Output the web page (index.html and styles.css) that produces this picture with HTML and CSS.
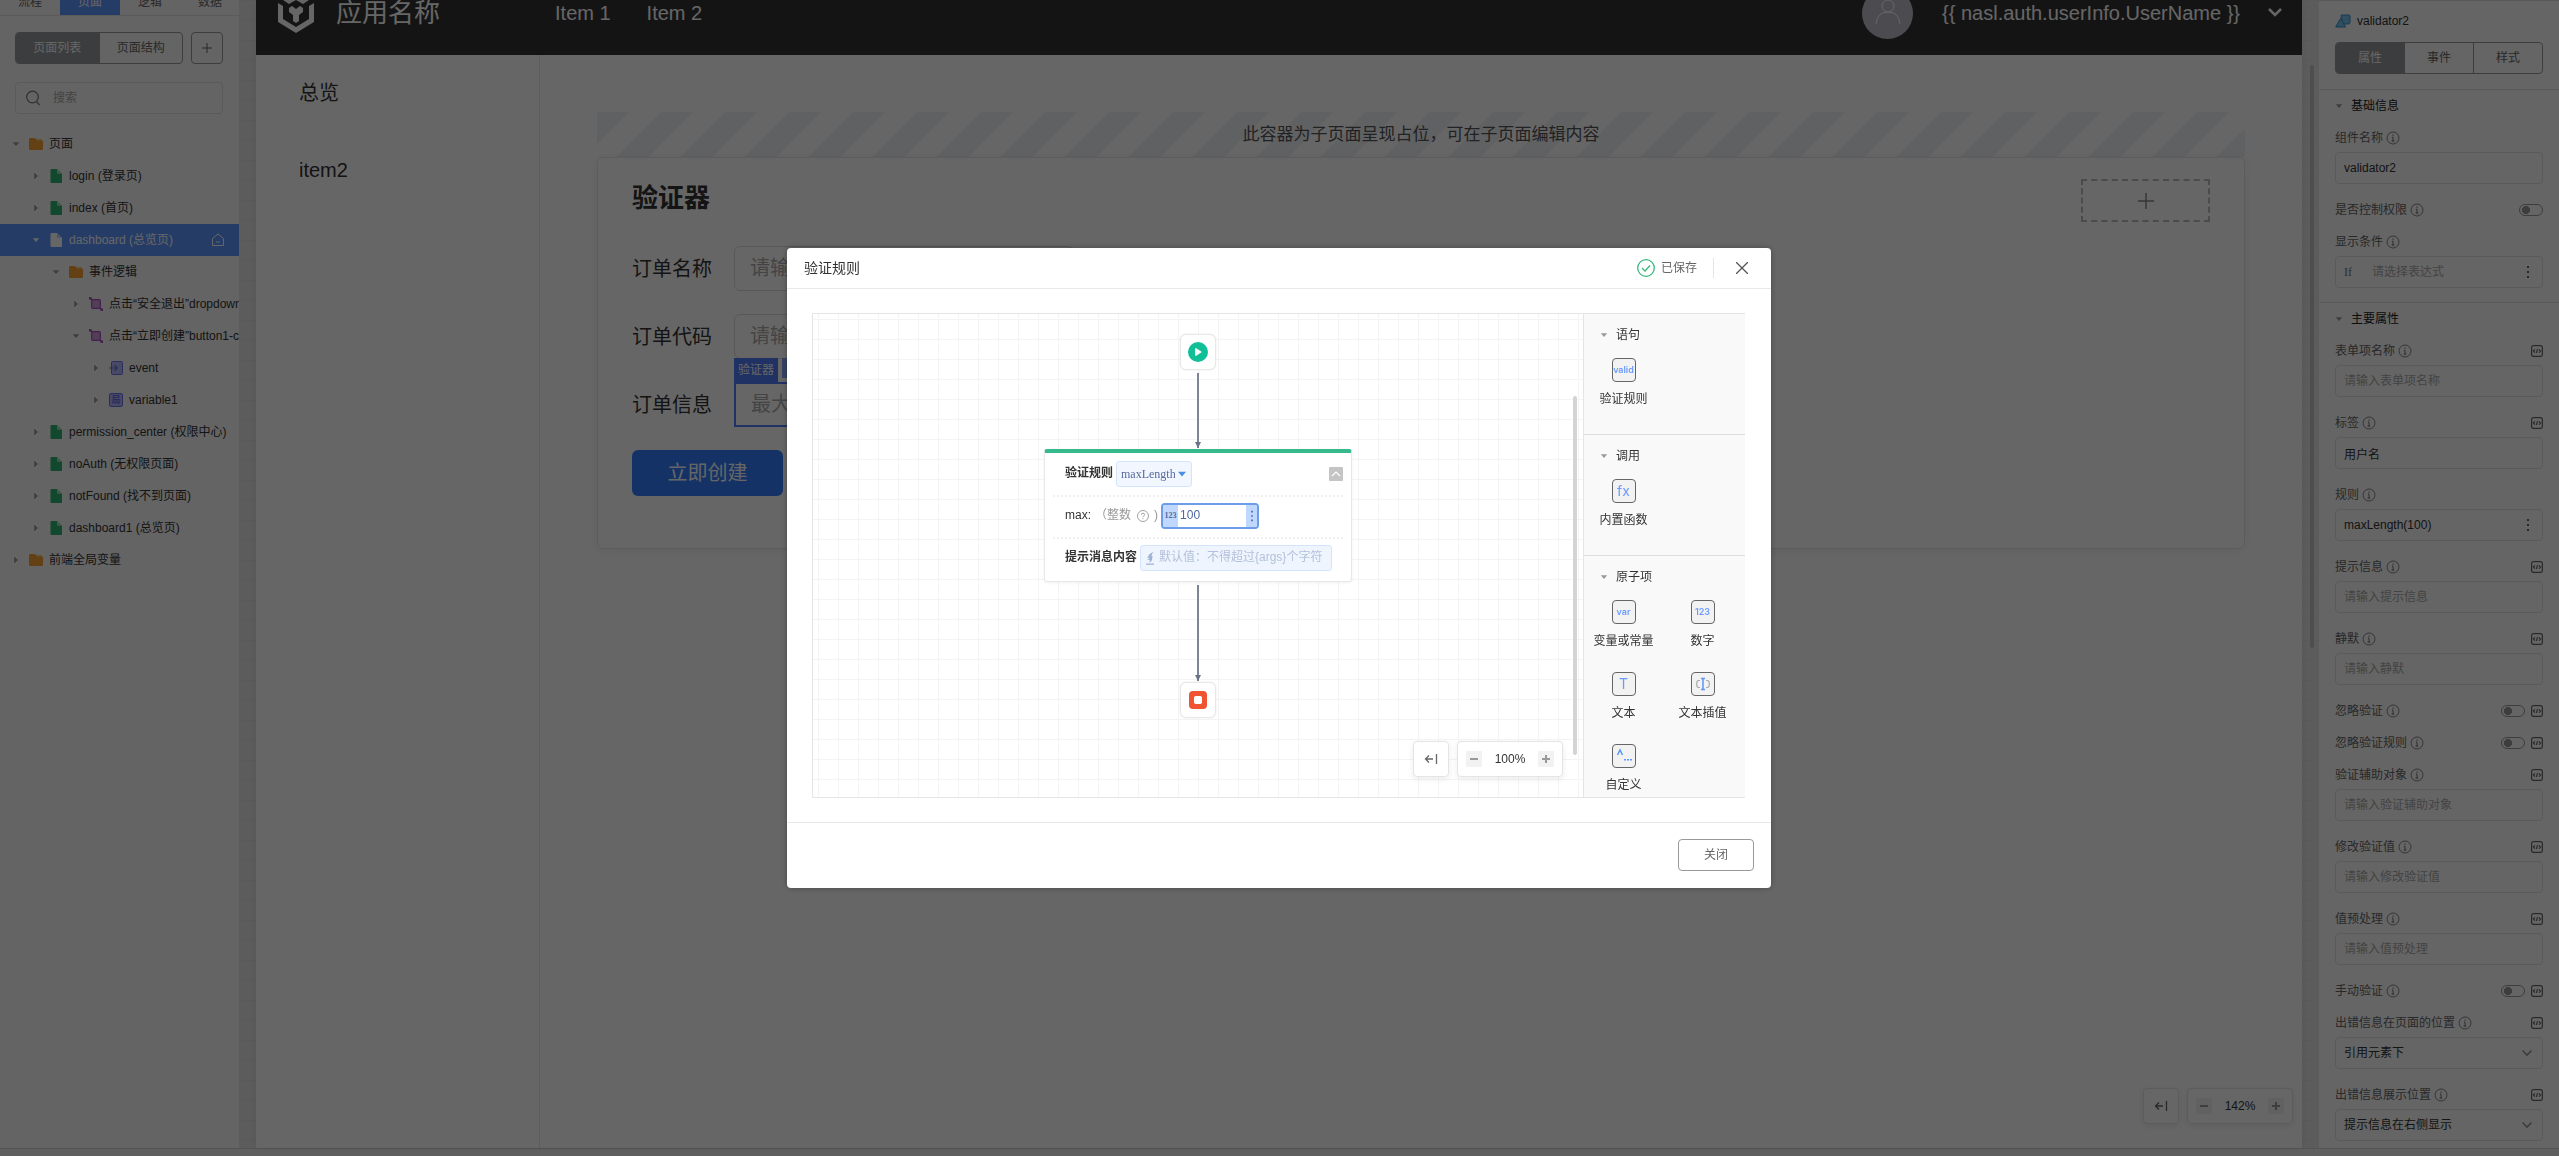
FILE: index.html
```html
<!DOCTYPE html>
<html lang="zh-CN">
<head>
<meta charset="utf-8">
<title>应用名称</title>
<link rel="stylesheet" href="styles.css">
</head>
<body>
<svg class="symbols" aria-hidden="true">
  <symbol id="i-info" viewBox="0 0 14 14"><circle cx="7" cy="7" r="6" fill="none" stroke="currentColor" stroke-width=".8"/><path d="M7 3.500v1.400M6 6.200h1v3.800M5.600 10.100h2.800" fill="none" stroke="currentColor" stroke-width=".9"/></symbol>
  <symbol id="i-code" viewBox="0 0 12 12"><rect x=".6" y=".6" width="10.800" height="10.800" rx="1.800" fill="none" stroke="currentColor" stroke-width="1.200"/><path d="M4 4.300 2.300 6 4 7.700M8 4.300 9.700 6 8 7.700M6.600 4 5.400 8" fill="none" stroke="currentColor" stroke-width="1.100"/></symbol>
  <symbol id="i-down" viewBox="0 0 8 8"><path d="M.8 2.200h6.400L4 6z" fill="currentColor"/></symbol>
  <symbol id="i-right" viewBox="0 0 8 8"><path d="M2.200.8v6.400L6 4z" fill="currentColor"/></symbol>
  <symbol id="i-folder" viewBox="0 0 14 14"><path d="M7 2h6v3H7z" fill="#f9cf94"/><path d="M0 2.200Q0 1 1.200 1H6l2 2.500h5q1 0 1 1V12q0 1-1 1H1q-1 0-1-1z" fill="#f7a233"/></symbol>
  <symbol id="i-page" viewBox="0 0 14 14"><path d="M1.500 1q0-1 1-1H8l5 4.800V13q0 1-1 1H2.500q-1 0-1-1z" fill="var(--page, #2fb573)"/><path d="M8 0l5 4.800H8z" fill="var(--fold, #a5dfc2)"/></symbol>
  <symbol id="i-logic" viewBox="0 0 14 14"><rect x="2.700" y="2.700" width="8.600" height="8.600" rx="1" fill="#cf9ad9" stroke="#a650bd" stroke-width="1.200"/><path d="M.5.500l2.500 2.500M11 11l2.500 2.500" stroke="#a650bd" stroke-width="1.800"/><path d="M0 0h3L0 3zM14 14h-3l3-3z" fill="#a650bd"/></symbol>
  <symbol id="i-event" viewBox="0 0 14 14"><rect x="2.500" y=".5" width="11" height="13" rx="1" fill="#b5b6f5" stroke="#6c6ff0"/><path d="M0 7h8M5.500 4.200 8.300 7 5.500 9.800" fill="none" stroke="#6c6ff0" stroke-width="1.200"/></symbol>
  <symbol id="i-back" viewBox="0 0 14 14"><path d="M1.500 7H9M5 3.500 1.500 7 5 10.500M12.500 2v10" fill="none" stroke="currentColor" stroke-width="1.300"/></symbol>
  <symbol id="i-minus" viewBox="0 0 16 16"><path d="M4 8h8" stroke="currentColor" stroke-width="2"/></symbol>
  <symbol id="i-plus" viewBox="0 0 16 16"><path d="M4 8h8M8 4v8" stroke="currentColor" stroke-width="2"/></symbol>
  <symbol id="i-more" viewBox="0 0 4 14"><path d="M1 1h2v2H1zM1 6h2v2H1zM1 11h2v2H1z" fill="currentColor"/></symbol>
  <symbol id="i-chevron" viewBox="0 0 14 14"><path d="M2.500 4.500 7 9l4.500-4.500" fill="none" stroke="currentColor" stroke-width="1.600"/></symbol>
</svg>

<div class="ide">
  <div class="workspace">
    <aside class="explorer">
      <nav class="tabs">
        <button class="tab">流程</button><button class="tab tab-on">页面</button><button class="tab">逻辑</button><button class="tab">数据</button>
      </nav>
      <div class="tools">
        <div class="segment"><button class="seg seg-on">页面列表</button><button class="seg">页面结构</button></div>
        <button class="add" aria-label="新增"><svg width="10" height="10" viewBox="0 0 10 10"><path d="M0 5h10M5 0v10" stroke="currentColor"/></svg></button>
      </div>
      <label class="search"><svg width="16" height="16" viewBox="0 0 16 16"><circle cx="7.500" cy="7" r="5.800" fill="none" stroke="currentColor" stroke-width="1.200"/><path d="M11.500 11.500 14.500 15" stroke="currentColor" stroke-width="1.200"/></svg><input type="text" placeholder="搜索" aria-label="搜索"></label>
      <ul class="tree">
        <li class="node l0"><svg class="caret"><use href="#i-down"/></svg><svg class="ico"><use href="#i-folder"/></svg><span>页面</span></li>
        <li class="node l1"><svg class="caret"><use href="#i-right"/></svg><svg class="ico"><use href="#i-page"/></svg><span>login (登录页)</span></li>
        <li class="node l1"><svg class="caret"><use href="#i-right"/></svg><svg class="ico"><use href="#i-page"/></svg><span>index (首页)</span></li>
        <li class="node l1 node-on"><svg class="caret"><use href="#i-down"/></svg><svg class="ico"><use href="#i-page"/></svg><span>dashboard (总览页)</span><svg class="home" viewBox="0 0 14 14"><path d="M1.500 5.500 7 1l5.500 4.500v7h-11zM5 9h4" fill="none" stroke="currentColor"/></svg></li>
        <li class="node l2"><svg class="caret"><use href="#i-down"/></svg><svg class="ico"><use href="#i-folder"/></svg><span>事件逻辑</span></li>
        <li class="node l3"><svg class="caret"><use href="#i-right"/></svg><svg class="ico"><use href="#i-logic"/></svg><span>点击“安全退出”dropdown</span></li>
        <li class="node l3"><svg class="caret"><use href="#i-down"/></svg><svg class="ico"><use href="#i-logic"/></svg><span>点击“立即创建”button1-click</span></li>
        <li class="node l4"><svg class="caret"><use href="#i-right"/></svg><svg class="ico"><use href="#i-event"/></svg><span>event</span></li>
        <li class="node l4"><svg class="caret"><use href="#i-right"/></svg><b class="ico local">局</b><span>variable1</span></li>
        <li class="node l1"><svg class="caret"><use href="#i-right"/></svg><svg class="ico"><use href="#i-page"/></svg><span>permission_center (权限中心)</span></li>
        <li class="node l1"><svg class="caret"><use href="#i-right"/></svg><svg class="ico"><use href="#i-page"/></svg><span>noAuth (无权限页面)</span></li>
        <li class="node l1"><svg class="caret"><use href="#i-right"/></svg><svg class="ico"><use href="#i-page"/></svg><span>notFound (找不到页面)</span></li>
        <li class="node l1"><svg class="caret"><use href="#i-right"/></svg><svg class="ico"><use href="#i-page"/></svg><span>dashboard1 (总览页)</span></li>
        <li class="node l0"><svg class="caret"><use href="#i-right"/></svg><svg class="ico"><use href="#i-folder"/></svg><span>前端全局变量</span></li>
      </ul>
    </aside>

    <main class="stage">
      <div class="app">
        <header class="app-head">
          <svg class="logo" viewBox="0 0 36 42"><path d="M0 11v19l18 11 18-11V11l-5 3v13L18 35 5 27V14z" fill="#fff"/><path d="M5 8 18 0l13 8-6 4-7-4-7 4z" fill="#fff"/><path d="m11 16 3-2 4 3 4-3 3 2v4l-4 3v6l-3 2-3-2v-6l-4-3z" fill="#fff"/></svg>
          <span class="app-name">应用名称</span>
          <a href="#" class="app-link">Item 1</a><a href="#" class="app-link">Item 2</a>
          <span class="avatar"><svg width="30" height="30" viewBox="0 0 30 30"><circle cx="15" cy="8" r="6" fill="none" stroke="#fff"/><path d="M3 26q1-12 12-12t12 12" fill="none" stroke="#fff"/></svg></span>
          <span class="user">{{ nasl.auth.userInfo.UserName }}</span>
          <svg class="user-more" viewBox="0 0 20 20"><path d="m4 6 6 6 6-6" fill="none" stroke="currentColor" stroke-width="2.500"/></svg>
        </header>
        <div class="app-body">
          <nav class="app-side"><a href="#">总览</a><a href="#">item2</a></nav>
          <section class="app-main">
            <p class="slot">此容器为子页面呈现占位，可在子页面编辑内容</p>
            <div class="card">
              <div class="card-head"><h2>验证器</h2><button class="drop" aria-label="添加"><svg width="16" height="16" viewBox="0 0 16 16"><path d="M0 8h16M8 0v16" stroke="currentColor" stroke-width="1.500"/></svg></button></div>
              <form class="form">
                <div class="line"><label for="o1">订单名称</label><input id="o1" type="text" placeholder="请输入订单名称"></div>
                <div class="line"><label for="o2">订单代码</label><input id="o2" type="text" placeholder="请输入订单代码"></div>
                <div class="line"><label for="o3">订单信息</label><div class="picked"><div class="picked-tags"><span>验证器</span><i></i></div><input id="o3" type="text" placeholder="最大长度100"></div></div>
                <button type="button" class="create">立即创建</button>
              </form>
            </div>
          </section>
        </div>
      </div>
      <div class="stage-scroll"></div>
      <div class="zoom zoom-stage"><button class="zoom-fit" aria-label="收起"><svg width="14" height="14"><use href="#i-back"/></svg></button><div class="zoom-group"><button aria-label="缩小"><svg width="16" height="16"><use href="#i-minus"/></svg></button><span>142%</span><button aria-label="放大"><svg width="16" height="16"><use href="#i-plus"/></svg></button></div></div>
    </main>

    <aside class="props">
      <div class="props-head">
        <div class="props-name"><svg width="16" height="16" viewBox="0 0 16 16"><path d="M6 3q0-1 1-1h7q1 0 1 1v6q0 2-2 2H8z" fill="#7fc4ee" stroke="#2e94d6"/><path d="M5.500 5.500 10.500 14H.7z" fill="#7fc4ee" stroke="#2e94d6"/></svg><span>validator2</span></div>
        <div class="segment"><button class="seg seg-on">属性</button><button class="seg">事件</button><button class="seg">样式</button></div>
      </div>
      <section class="group">
        <h3><svg class="caret"><use href="#i-down"/></svg>基础信息</h3>
        <div class="field"><div class="cap"><label for="p1">组件名称</label><svg class="info"><use href="#i-info"/></svg></div><input id="p1" class="box" type="text" value="validator2"></div>
        <div class="field flat"><div class="cap"><label for="p2">是否控制权限</label><svg class="info"><use href="#i-info"/></svg><input id="p2" type="checkbox" class="switch"></div></div>
        <div class="field"><div class="cap"><label for="p3">显示条件</label><svg class="info"><use href="#i-info"/></svg></div><div class="box"><span class="if">If</span><input id="p3" type="text" placeholder="请选择表达式"><svg class="more"><use href="#i-more"/></svg></div></div>
      </section>
      <section class="group">
        <h3><svg class="caret"><use href="#i-down"/></svg>主要属性</h3>
        <div class="field"><div class="cap"><label for="q1">表单项名称</label><svg class="info"><use href="#i-info"/></svg><svg class="s12 code"><use href="#i-code"/></svg></div><input id="q1" class="box" type="text" placeholder="请输入表单项名称"></div>
        <div class="field"><div class="cap"><label for="q2">标签</label><svg class="info"><use href="#i-info"/></svg><svg class="s12 code"><use href="#i-code"/></svg></div><input id="q2" class="box" type="text" value="用户名"></div>
        <div class="field"><div class="cap"><label for="q3">规则</label><svg class="info"><use href="#i-info"/></svg></div><div class="box"><input id="q3" type="text" value="maxLength(100)"><svg class="more"><use href="#i-more"/></svg></div></div>
        <div class="field"><div class="cap"><label for="q4">提示信息</label><svg class="info"><use href="#i-info"/></svg><svg class="s12 code"><use href="#i-code"/></svg></div><input id="q4" class="box" type="text" placeholder="请输入提示信息"></div>
        <div class="field"><div class="cap"><label for="q5">静默</label><svg class="info"><use href="#i-info"/></svg><svg class="s12 code"><use href="#i-code"/></svg></div><input id="q5" class="box" type="text" placeholder="请输入静默"></div>
        <div class="field flat"><div class="cap"><label for="q6">忽略验证</label><svg class="info"><use href="#i-info"/></svg><input id="q6" type="checkbox" class="switch"><svg class="s12"><use href="#i-code"/></svg></div></div>
        <div class="field flat"><div class="cap"><label for="q7">忽略验证规则</label><svg class="info"><use href="#i-info"/></svg><input id="q7" type="checkbox" class="switch"><svg class="s12"><use href="#i-code"/></svg></div></div>
        <div class="field"><div class="cap"><label for="q8">验证辅助对象</label><svg class="info"><use href="#i-info"/></svg><svg class="s12 code"><use href="#i-code"/></svg></div><input id="q8" class="box" type="text" placeholder="请输入验证辅助对象"></div>
        <div class="field"><div class="cap"><label for="q9">修改验证值</label><svg class="info"><use href="#i-info"/></svg><svg class="s12 code"><use href="#i-code"/></svg></div><input id="q9" class="box" type="text" placeholder="请输入修改验证值"></div>
        <div class="field"><div class="cap"><label for="q10">值预处理</label><svg class="info"><use href="#i-info"/></svg><svg class="s12 code"><use href="#i-code"/></svg></div><input id="q10" class="box" type="text" placeholder="请输入值预处理"></div>
        <div class="field flat"><div class="cap"><label for="q11">手动验证</label><svg class="info"><use href="#i-info"/></svg><input id="q11" type="checkbox" class="switch"><svg class="s12"><use href="#i-code"/></svg></div></div>
        <div class="field"><div class="cap"><label for="q12">出错信息在页面的位置</label><svg class="info"><use href="#i-info"/></svg><svg class="s12 code"><use href="#i-code"/></svg></div><div class="box"><select id="q12"><option>引用元素下</option></select><svg class="arrow"><use href="#i-chevron"/></svg></div></div>
        <div class="field"><div class="cap"><label for="q13">出错信息展示位置</label><svg class="info"><use href="#i-info"/></svg><svg class="s12 code"><use href="#i-code"/></svg></div><div class="box"><select id="q13"><option>提示信息在右侧显示</option></select><svg class="arrow"><use href="#i-chevron"/></svg></div></div>
      </section>
    </aside>
  </div>
  <footer class="status"></footer>
</div>

<div class="mask">
  <div class="modal" role="dialog" aria-label="验证规则">
    <header class="modal-head">
      <h1>验证规则</h1>
      <svg width="18" height="18" viewBox="0 0 18 18"><circle cx="9" cy="9" r="8.300" fill="none" stroke="#36b97f" stroke-width="1.300"/><path d="m5 9 3 3 5-5.500" fill="none" stroke="#36b97f" stroke-width="1.300"/></svg>
      <span class="saved">已保存</span>
      <button class="close" aria-label="关闭窗口"><svg width="12" height="12" viewBox="0 0 12 12"><path d="m0 0 12 12M12 0 0 12" stroke="currentColor" stroke-width="1.300"/></svg></button>
    </header>
    <div class="editor">
      <div class="flow">
        <div class="pin"><svg width="20" height="20" viewBox="0 0 20 20"><circle cx="10" cy="10" r="10" fill="#10bf97"/><path d="M7.800 6.800 12.800 10l-5 3.200z" fill="#fff" stroke="#fff" stroke-width="1.400" stroke-linejoin="round"/></svg></div>
        <div class="wire wire-a"></div>
        <div class="block">
          <div class="row"><b>验证规则</b><label class="pick"><select aria-label="验证规则"><option>maxLength</option></select><svg width="10" height="10" viewBox="0 0 8 8"><use href="#i-down" width="8" height="8"/></svg></label><button class="fold" aria-label="折叠"><svg width="10" height="10" viewBox="0 0 10 10"><path d="M1 7 5 3l4 4" fill="none" stroke="#fff" stroke-width="1.200"/></svg></button></div>
          <div class="row"><label class="arg" for="max">max:</label><span class="hint">（整数</span><svg class="help" viewBox="0 0 12 12"><circle cx="6" cy="6" r="5.500" fill="none" stroke="currentColor" stroke-width=".9"/><path d="M4.400 4.800q0-1.600 1.600-1.600t1.600 1.500q0 .9-.9 1.300-.7.300-.7 1.200M6 8.200v1" fill="none" stroke="currentColor" stroke-width=".9"/></svg><span class="hint end">)</span><div class="num"><i>123</i><input id="max" type="text" value="100"><span><svg width="4" height="12"><use href="#i-more"/></svg></span></div></div>
          <div class="row"><b>提示消息内容</b><div class="tip"><svg width="10" height="13" viewBox="0 0 10 13"><path d="M8.500 0Q3 2 3.500 4.500L1.500 5.500 5 6 2 7.500l3 .5L4 10.500Q8 9 7 5.500L8.500 5 6.500 4Q6.500 2 8.500 0zM1 11.600h8v1.200H1z" fill="currentColor"/></svg><input type="text" placeholder="默认值：不得超过{args}个字符" aria-label="提示消息内容"></div></div>
        </div>
        <div class="wire wire-b"></div>
        <div class="pin"><svg width="20" height="20" viewBox="0 0 20 20"><rect x="1" y="1" width="18" height="18" rx="4" fill="#f0532f"/><rect x="6" y="6" width="8" height="8" rx="1.800" fill="#fff"/></svg></div>
        <div class="flow-scroll"></div>
        <div class="zoom zoom-flow"><button class="zoom-fit" aria-label="收起面板"><svg width="14" height="14"><use href="#i-back"/></svg></button><div class="zoom-group"><button aria-label="缩小画布"><svg width="16" height="16"><use href="#i-minus"/></svg></button><span>100%</span><button aria-label="放大画布"><svg width="16" height="16"><use href="#i-plus"/></svg></button></div></div>
      </div>
      <div class="palette">
        <section><h3><svg class="caret"><use href="#i-down"/></svg>语句</h3><div class="items"><div class="item"><i class="small">valid</i><span>验证规则</span></div></div></section>
        <section><h3><svg class="caret"><use href="#i-down"/></svg>调用</h3><div class="items"><div class="item"><i>fx</i><span>内置函数</span></div></div></section>
        <section><h3><svg class="caret"><use href="#i-down"/></svg>原子项</h3><div class="items">
          <div class="item"><i class="small">var</i><span>变量或常量</span></div>
          <div class="item"><i class="small">123</i><span>数字</span></div>
          <div class="item"><i>T</i><span>文本</span></div>
          <div class="item"><i><svg width="14" height="14" viewBox="0 0 14 14"><path d="M4 3.500H2.500q-1.800 0-1.800 3.500t1.800 3.500H4M10 3.500h1.500q1.800 0 1.800 3.500t-1.800 3.500H10" fill="none" stroke="#aaa" stroke-width="1.200"/><path d="M7 1.500v11M5 1.500h4M5 12.500h4" stroke="#5e94ff" stroke-width="1.500"/></svg></i><span>文本插值</span></div>
          <div class="item"><i><svg width="16" height="16" viewBox="0 0 16 16"><path d="m1.500 7 2.500-5 2.500 5" fill="none" stroke="#5e94ff" stroke-width="1.500"/><path d="M8 11h2v1.500H8zM11 11h2v1.500h-2zM14 11h2v1.500h-2z" fill="#5e94ff"/></svg></i><span>自定义</span></div>
        </div></section>
      </div>
    </div>
    <footer class="modal-foot"><button>关闭</button></footer>
  </div>
</div>
</body>
</html>
```
FILE: styles.css
```css
* { box-sizing: border-box; }
body { margin: 0; font: 12px/18px "Liberation Sans", "Noto Sans CJK SC", sans-serif; color: #333; }
button, input, select { font: inherit; color: inherit; margin: 0; padding: 0; border: 0; background: none; outline: 0; }
input, select { min-width: 0; appearance: none; }
h1, h2, h3, p, ul { margin: 0; padding: 0; font-weight: normal; }
h3 { font-size: 12px; }
a { color: inherit; text-decoration: none; }
svg { display: block; flex: none; }
button { display: flex; align-items: center; justify-content: center; }
.symbols { display: none; }
::placeholder { color: #aaa; opacity: 1; }

.ide { display: flex; flex-direction: column; height: 100vh; overflow: hidden; background: #fff; }
.workspace { display: flex; flex: 1; min-height: 0; }
.status { height: 8px; background: #eee; border-top: 1px solid #d0d0d0; }
.caret { width: 8px; height: 8px; color: #999; }

/* Explorer */
.explorer { width: 239px; flex: none; overflow: hidden; background: #fafafa; }
.tabs { display: flex; align-items: flex-end; height: 16px; overflow: hidden; border-bottom: 1px solid #e0e0e0; }
.tab { width: 60px; flex: none; height: 26px; color: #666; }
.tab-on { background: #5e97ff; color: #fff; }
.tools { display: flex; gap: 8px; padding: 16px 16px 0 15px; }
.segment { display: flex; flex: 1; height: 32px; border: 1px solid #97999e; border-radius: 4px; overflow: hidden; }
.seg { flex: 1; color: #666; }
.seg + .seg { border-left: 1px solid #97999e; }
.seg-on { background: #97999e; color: #fff; }
.add { width: 32px; height: 32px; border: 1px solid #97999e; border-radius: 4px; color: #666; }
.search { display: flex; align-items: center; gap: 12px; height: 32px; margin: 18px 16px 14px 15px; padding: 0 9px; border: 1px solid #e0e0e0; border-radius: 4px; color: #777; }
.search input { flex: 1; }
.tree { list-style: none; }
.node { display: flex; align-items: center; height: 32px; padding: 0 0 1px 12px; white-space: nowrap; overflow: hidden; }
.node .ico { width: 14px; height: 14px; margin: 0 6px 0 9px; flex: none; }
.l1 { padding-left: 32px; }
.l2 { padding-left: 52px; }
.l3 { padding-left: 72px; }
.l4 { padding-left: 92px; }
.node-on { background: #5e97ff; color: #fff; --page: #fff; --fold: #b9d0ff; }
.node-on .caret { color: #fff; }
.home { width: 14px; height: 14px; margin: 0 14px 0 auto; }
.local { border: 1px solid #6c6ff0; border-radius: 2px; background: #b5b6f5; color: #6c6ff0; font-size: 9px; line-height: 12px; text-align: center; }

/* Stage */
.stage { position: relative; flex: 1; min-width: 0; display: flex; padding: 0 17px; background: linear-gradient(#e0e0e0 1px, transparent 1px) 0 0 / 20px 20px #e6e6e6; }
.app { flex: 1; display: flex; flex-direction: column; background: #fff; font-size: 20px; line-height: 30px; box-shadow: 0 0 8px rgba(0, 0, 0, .06); }
.app-head { display: flex; align-items: center; height: 55px; padding: 0 17px 29px 22px; background: #333; color: #fff; overflow: hidden; }
.logo { width: 36px; height: 42px; }
.app-name { margin-left: 22px; font-size: 26px; }
.app-link { margin-left: 36px; }
.app-name + .app-link { margin-left: 115px; }
.avatar { display: grid; place-items: center; width: 51px; height: 51px; margin-left: auto; border-radius: 50%; background: #bfbfc8; }
.user { margin-left: 29px; }
.user-more { width: 20px; height: 20px; margin-left: 25px; }
.app-body { display: flex; flex: 1; }
.app-side { display: flex; flex-direction: column; width: 284px; padding: 0 43px; border-right: 1px solid #e5e5e5; line-height: 77px; }
.app-main { flex: 1; padding: 57px; }
.slot { height: 45px; font-size: 17px; line-height: 45px; text-align: center; color: #555; background: linear-gradient(135deg, #f0f2f5 25%, transparent 25%, transparent 50%, #f0f2f5 50%, #f0f2f5 75%, transparent 75%) 0 0 / 64px 64px; }
.card { padding: 21px 34px 52px; border: 1px solid #e5e5e5; border-radius: 6px; box-shadow: 0 2px 12px rgba(0, 0, 0, .06); }
.card-head { display: flex; justify-content: space-between; }
.card-head h2 { font-size: 26px; font-weight: bold; line-height: 38px; }
.drop { width: 129px; height: 43px; border: 2px dashed #bbb; color: #888; }
.form { display: flex; flex-direction: column; align-items: flex-start; gap: 23px; margin-top: 24px; }
.line { display: flex; align-items: center; gap: 22px; height: 45px; }
.line label { width: 80px; }
.line input { width: 340px; height: 45px; padding: 0 15px; border: 1px solid #dcdcdc; border-radius: 6px; }
.picked { position: relative; }
.picked input { border: 2px solid #517bf7; border-radius: 0; }
.picked-tags { position: absolute; left: 0; bottom: 100%; display: flex; gap: 4px; height: 24px; font-size: 12px; line-height: 24px; color: #fff; }
.picked-tags span { padding: 0 4px; background: #517bf7; }
.picked-tags i { width: 60px; height: 20px; background: #8ba6f8; }
.create { width: 151px; height: 46px; border-radius: 6px; background: #337eff; color: #fff; }
.stage-scroll { position: absolute; top: 65px; right: 5px; width: 4px; height: 583px; border-radius: 2px; background: #c2c2c2; }

.zoom { position: absolute; display: flex; gap: 8px; color: #666; }
.zoom-stage { right: 26px; bottom: 24px; }
.zoom-flow { right: 20px; bottom: 20px; }
.zoom-fit, .zoom-group { height: 36px; border: 1px solid #e5e5e5; border-radius: 4px; background: #fff; box-shadow: 0 2px 6px rgba(0, 0, 0, .08); }
.zoom-fit { width: 36px; }
.zoom-group { display: flex; align-items: center; justify-content: space-between; width: 106px; padding: 0 8px; }
.zoom-group span { color: #333; }
.zoom-group button { background: #f2f2f2; color: #999; }

/* Properties */
.props { width: 240px; flex: none; background: #fcfcfc; border-top: 1px solid #ddd; overflow: hidden; }
.props-head { padding: 11px 16px 15px; }
.props-name { display: flex; align-items: center; gap: 6px; height: 18px; margin-bottom: 12px; }
.group { padding: 0 16px 2px; border-top: 1px solid #e0e0e0; }
.group h3 { display: flex; align-items: center; gap: 8px; height: 34px; padding-bottom: 3px; color: #222; }
.field { margin-bottom: 12px; }
.field.flat { margin-bottom: 4px; }
.cap { display: flex; align-items: center; height: 28px; color: #666; }
.info { width: 14px; height: 14px; margin-left: 3px; }
.s12 { width: 12px; height: 12px; }
.cap .code { margin-left: auto; }
.switch { width: 24px; height: 12px; margin: 0 0 0 auto; border: 1px solid #999; border-radius: 6px; background: radial-gradient(circle at 6px 5px, #999 4px, transparent 4px); }
.switch + .s12 { margin-left: 6px; }
.box { display: flex; align-items: center; width: 100%; height: 32px; padding: 0 8px; border: 1px solid #e0e0e0; border-radius: 4px; }
.box input, .box select { flex: 1; }
.if { width: 28px; font-family: "Liberation Serif", serif; color: #777; }
.more { width: 4px; height: 14px; margin: 0 4px; color: #666; }
.arrow { width: 14px; height: 14px; color: #999; }

/* Modal */
.mask { position: fixed; inset: 0; display: flex; justify-content: center; align-items: flex-start; padding: 248px 1px 0 0; background: rgba(0, 0, 0, .6); }
.modal { width: 984px; height: 640px; display: flex; flex-direction: column; border-radius: 4px; background: #fff; box-shadow: 0 0 6px rgba(0, 0, 0, .3); overflow: hidden; }
.modal-head { display: flex; align-items: center; height: 41px; padding: 0 23px 0 17px; border-bottom: 1px solid #e8e8e8; }
.modal-head h1 { flex: 1; font-size: 14px; line-height: 20px; }
.saved { margin-left: 6px; color: #666; }
.close { height: 20px; margin-left: 16px; padding-left: 22px; border-left: 1px solid #e5e5e5; color: #555; }
.editor { flex: 1; min-height: 0; display: flex; margin: 24px 26px 24px 25px; border: 1px solid #e5e5e5; border-right: 0; overflow: hidden; }
.flow { position: relative; flex: 1; display: flex; flex-direction: column; align-items: center; padding-top: 20px; background: linear-gradient(#f4f4f4 1px, transparent 1px) 5px 5px / 20px 20px, linear-gradient(90deg, #f4f4f4 1px, transparent 1px) 5px 5px / 20px 20px #fff; }
.pin { display: grid; place-items: center; width: 36px; height: 36px; border: 1px solid #e8e8e8; border-radius: 6px; background: #fff; box-shadow: 0 0 2px rgba(0, 0, 0, .1); }
.wire { position: relative; width: 2px; margin: 3px 0 1px; background: #7d8695; }
.wire::after { content: ""; position: absolute; left: -2px; bottom: 0; border: 3px solid transparent; border-top: 6px solid #6b7485; border-bottom: 0; }
.wire-a { height: 75px; }
.wire-b { height: 96px; }
.block { width: 308px; height: 133px; padding: 0 8px; border: 1px solid #e8e8e8; border-top: 4px solid #36b98b; border-radius: 3px; background: #fff; box-shadow: 0 1px 3px rgba(0, 0, 0, .06); }
.row { display: flex; align-items: center; height: 42px; padding-left: 12px; }
.row + .row { padding-bottom: 2px; border-top: 2px dotted #f0f0f0; }
.row b, .arg, .hint { padding-bottom: 2px; }
.row b { margin-right: 3px; }
.pick { display: flex; align-items: center; gap: 2px; height: 26px; padding: 0 4px; border: 1px solid #d5e4fd; border-radius: 3px; background: #f2f7ff; color: #4a90e2; }
.pick select { width: 54px; font-family: "Liberation Serif", serif; color: #566a9e; }
.fold { width: 14px; height: 14px; margin-left: auto; border-radius: 1px; background: #c4c4c4; }
.hint { margin-left: 4px; color: #999; }
.hint.end { margin: 0 3px 0 5px; }
.help { width: 12px; height: 12px; margin-left: 6px; color: #999; }
.num { display: flex; width: 98px; height: 26px; border: 2px solid #6d9de8; border-radius: 4px; overflow: hidden; color: #4d68a5; }
.num i { width: 15px; background: #c0d8ff; font: bold 8px/22px "Liberation Serif", serif; text-align: center; }
.num input { flex: 1; padding: 0 0 2px 2px; }
.num span { display: grid; place-items: center; width: 11px; background: #c0d8ff; }
.tip { display: flex; align-items: center; gap: 4px; width: 192px; height: 26px; padding: 0 4px; border: 1px solid #d5e4fd; border-radius: 3px; background: #eff5ff; color: #9fb2d4; }
.tip input { flex: 1; padding-bottom: 2px; }
.tip ::placeholder { color: #b3c0d9; }
.flow-scroll { position: absolute; right: 6px; top: 82px; width: 4px; height: 359px; border-radius: 2px; background: #d4d4d4; }
.palette { width: 162px; flex: none; background: #f9f9f9; border-left: 1px solid #e5e5e5; }
.palette section { padding-bottom: 4px; border-bottom: 1px solid #ddd; }
.palette h3 { display: flex; align-items: center; gap: 8px; height: 44px; padding: 0 0 2px 16px; }
.items { display: grid; grid-template-columns: 79px 79px; }
.item { display: flex; flex-direction: column; align-items: center; gap: 8px; height: 72px; }
.item i { display: grid; place-items: center; width: 24px; height: 24px; border: 1px solid #666; border-radius: 4px; background: #f2f2f2; color: #6b9bff; font: normal 14px/18px Inter, sans-serif; }
.item .small { font-size: 9px; font-weight: 600; }
.modal-foot { display: flex; justify-content: flex-end; height: 66px; padding: 16px 17px; border-top: 1px solid #e8e8e8; }
.modal-foot button { width: 76px; height: 32px; border: 1px solid #999; border-radius: 4px; color: #666; }
```
